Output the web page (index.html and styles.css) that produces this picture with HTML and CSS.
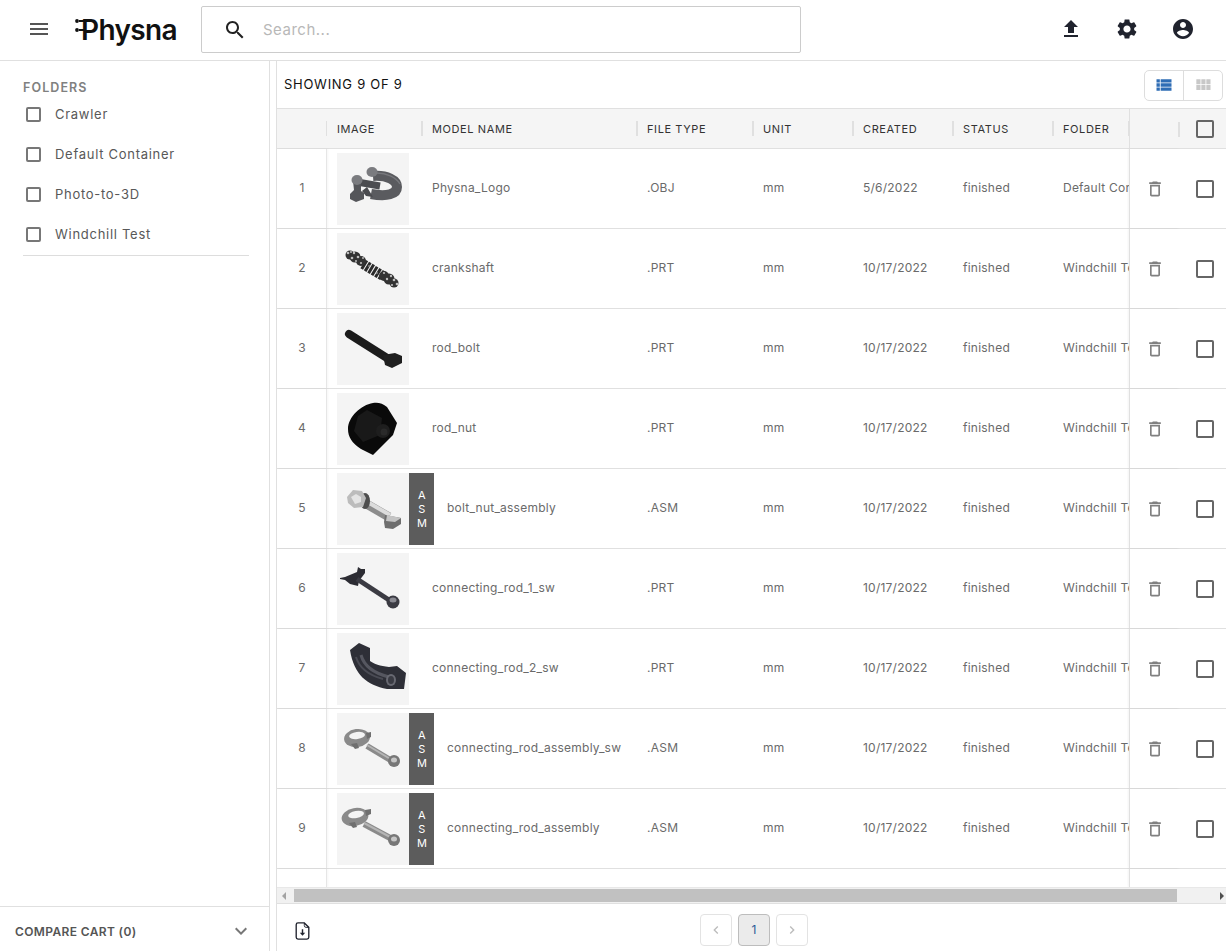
FILE: index.html
```html
<!DOCTYPE html>
<html lang="en">
<head>
<meta charset="utf-8">
<title>Physna</title>
<link rel="stylesheet" href="styles.css">
</head>
<body>
<header class="topbar">
  <svg class="icon menu-icon" viewBox="0 0 24 24"><path d="M3 18h18v-2H3v2zm0-5h18v-2H3v2zm0-7v2h18V6H3z"/></svg>
  <div class="logo"><svg class="logo-dots" viewBox="0 0 10 16"><circle cx="2" cy="3" r="1.900"/><circle cx="2" cy="12" r="1.900"/><rect x="4" y="2" width="6" height="2"/><rect x="4" y="11" width="6" height="2"/></svg><span class="logo-text">Physna</span></div>
  <div class="search">
    <svg class="icon search-icon" viewBox="0 0 24 24"><path d="M15.5 14h-.79l-.28-.27C15.41 12.59 16 11.11 16 9.500 16 5.910 13.090 3 9.500 3S3 5.910 3 9.500 5.910 16 9.500 16c1.610 0 3.090-.59 4.230-1.570l.27.28v.79l5 4.990L20.490 19l-4.990-5zm-6 0C7.010 14 5 11.990 5 9.500S7.010 5 9.500 5 14 7.010 14 9.500 11.990 14 9.500 14z"/></svg>
    <span class="placeholder">Search...</span>
  </div>
  <div class="top-actions">
    <svg class="icon" viewBox="0 0 24 24"><path d="M9 16h6v-6h4l-7-7-7 7h4zm-4 2h14v2H5z"/></svg>
    <svg class="icon" viewBox="0 0 24 24"><path d="M19.14 12.94c.04-.3.06-.61.06-.94 0-.32-.02-.64-.07-.94l2.03-1.58c.18-.14.23-.41.12-.61l-1.92-3.32c-.12-.22-.37-.29-.59-.22l-2.39.96c-.5-.38-1.03-.7-1.62-.94l-.36-2.54c-.04-.24-.24-.41-.48-.41h-3.84c-.24 0-.43.17-.47.41l-.36 2.54c-.59.24-1.13.57-1.62.94l-2.39-.96c-.22-.08-.47 0-.59.22L2.74 8.87c-.12.21-.08.47.12.61l2.03 1.58c-.05.3-.09.63-.09.94s.02.64.07.94l-2.03 1.58c-.18.14-.23.41-.12.61l1.92 3.32c.12.22.37.29.59.22l2.39-.96c.5.38 1.03.7 1.62.94l.36 2.54c.05.24.24.41.48.41h3.84c.24 0 .44-.17.47-.41l.36-2.54c.59-.24 1.13-.56 1.62-.94l2.39.96c.22.08.47 0 .59-.22l1.92-3.32c.12-.22.07-.47-.12-.61l-2.01-1.58zM12 15.6c-1.98 0-3.6-1.62-3.6-3.6s1.62-3.6 3.6-3.6 3.6 1.62 3.6 3.6-1.62 3.6-3.6 3.6z"/></svg>
    <svg class="icon" viewBox="0 0 24 24"><path d="M12 2C6.48 2 2 6.48 2 12s4.48 10 10 10 10-4.48 10-10S17.52 2 12 2zm0 3c1.66 0 3 1.34 3 3s-1.34 3-3 3-3-1.34-3-3 1.34-3 3-3zm0 14.2c-2.5 0-4.71-1.28-6-3.22.03-1.99 4-3.08 6-3.08 1.99 0 5.97 1.09 6 3.08-1.29 1.94-3.5 3.22-6 3.22z"/></svg>
  </div>
</header>
<div class="body">
  <aside class="sidebar">
    <div class="folders">
      <h2 class="folders-title">FOLDERS</h2>
      <div class="folder-row"><span class="check"></span>Crawler</div>
      <div class="folder-row"><span class="check"></span>Default Container</div>
      <div class="folder-row"><span class="check"></span>Photo-to-3D</div>
      <div class="folder-row"><span class="check"></span>Windchill Test</div>
    </div>
    <div class="compare">
      <span>COMPARE CART (0)</span>
      <svg class="compare-chevron" viewBox="0 0 24 24"><path d="M7.41 8.59 12 13.17l4.590-4.580L18 10l-6 6-6-6z"/></svg>
    </div>
  </aside>
  <main class="main">
    <div class="toolbar">
      <span class="showing">SHOWING 9 OF 9</span>
      <div class="toggle">
        <span class="toggle-btn"><svg class="toggle-icon active" viewBox="0 0 24 24"><path d="M3 14h4v-4H3v4zm0 5h4v-4H3v4zM3 9h4V5H3v4zm5 5h13v-4H8v4zm0 5h13v-4H8v4zM8 5v4h13V5H8z"/></svg></span>
        <span class="toggle-btn"><svg class="toggle-icon" viewBox="0 0 24 24"><path d="M4 11h5V5H4v6zm0 7h5v-6H4v6zm6 0h5v-6h-5v6zm6 0h5v-6h-5v6zm-6-7h5V5h-5v6zm6-6v6h5V5h-5z"/></svg></span>
      </div>
    </div>
    <div class="table">
      <div class="row head">
        <div class="hc"></div>
        <div class="hc">IMAGE</div>
        <div class="hc hc-strong">MODEL NAME</div>
        <div class="hc">FILE TYPE</div>
        <div class="hc">UNIT</div>
        <div class="hc">CREATED</div>
        <div class="hc">STATUS</div>
        <div class="hc">FOLDER</div>
        <div class="hc hc-action"></div>
        <div class="hc hc-check"><span class="check check-lg"></span></div>
      </div>

      <div class="row item">
        <div class="c idx">1</div>
        <div class="c img"><svg class="thumb" viewBox="0 0 72 72"><path d="M36 23C50 22 60 27 60 34 60 41 50 44 34 41" fill="none" stroke="#5a5b5f" stroke-width="10"/><path d="M20 29l23 4" stroke="#4b4c50" stroke-width="7"/><path d="M30 34l6 10-7-1-4-5z" fill="#4b4c50"/><path d="M16 28h8v10l3 2 0 6-8 3-6-3 0-5 4-4z" fill="#55565a"/><path d="M40 20c9 0 19 4 23 11" fill="none" stroke="#77787c" stroke-width="1.500"/><ellipse cx="20" cy="27" rx="5.500" ry="5" fill="#7a7b7f"/><ellipse cx="35" cy="19" rx="5.500" ry="5" fill="#7a7b7f"/></svg></div>
        <div class="c name">Physna_Logo</div><div class="c">.OBJ</div><div class="c">mm</div><div class="c">5/6/2022</div><div class="c">finished</div><div class="c fold">Default Container</div>
        <div class="c act"><svg class="trash" viewBox="0 0 24 24"><path d="M6 19c0 1.100.9 2 2 2h8c1.100 0 2-.9 2-2V7H6v12zM8 9h8v10H8V9zm7.500-5l-1-1h-5l-1 1H5v2h14V4z"/></svg></div>
        <div class="c chk"><span class="check check-lg"></span></div>
      </div>

      <div class="row item">
        <div class="c idx">2</div>
        <div class="c img"><svg class="thumb" viewBox="0 0 72 72"><path d="M26 31l20 12" stroke="#2b2b2b" stroke-width="10" stroke-dasharray="3 1"/><g fill="#333"><circle cx="13" cy="22" r="4.500"/><circle cx="18" cy="24" r="5.500"/><circle cx="24" cy="28" r="5"/><circle cx="47" cy="43" r="5"/><circle cx="52" cy="46" r="5.500"/><circle cx="57" cy="50" r="4.500"/></g><g fill="#bdbdbd"><circle cx="11" cy="20" r="1.300"/><circle cx="15" cy="25" r="1.300"/><circle cx="17" cy="20" r="1.200"/><circle cx="21" cy="24" r="1.300"/><circle cx="24" cy="30" r="1.100"/><circle cx="14" cy="19" r="1"/><circle cx="19" cy="28" r="1"/><circle cx="26" cy="25" r="1"/><circle cx="47" cy="40" r="1.100"/><circle cx="50" cy="46" r="1.200"/><circle cx="54" cy="43" r="1.200"/><circle cx="57" cy="47" r="1.300"/><circle cx="60" cy="51" r="1.300"/><circle cx="55" cy="52" r="1.100"/><circle cx="32" cy="33" r=".8"/><circle cx="40" cy="40" r=".8"/></g></svg></div>
        <div class="c name">crankshaft</div><div class="c">.PRT</div><div class="c">mm</div><div class="c">10/17/2022</div><div class="c">finished</div><div class="c fold">Windchill Test</div>
        <div class="c act"><svg class="trash" viewBox="0 0 24 24"><path d="M6 19c0 1.100.9 2 2 2h8c1.100 0 2-.9 2-2V7H6v12zM8 9h8v10H8V9zm7.500-5l-1-1h-5l-1 1H5v2h14V4z"/></svg></div>
        <div class="c chk"><span class="check check-lg"></span></div>
      </div>

      <div class="row item">
        <div class="c idx">3</div>
        <div class="c img"><svg class="thumb" viewBox="0 0 72 72"><path d="M12 21l38 24" stroke="#1b1b1b" stroke-width="8" stroke-linecap="round"/><path d="M46 42l12-2 7 3 0 7-10 5-7-3z" fill="#1f1f1f"/></svg></div>
        <div class="c name">rod_bolt</div><div class="c">.PRT</div><div class="c">mm</div><div class="c">10/17/2022</div><div class="c">finished</div><div class="c fold">Windchill Test</div>
        <div class="c act"><svg class="trash" viewBox="0 0 24 24"><path d="M6 19c0 1.100.9 2 2 2h8c1.100 0 2-.9 2-2V7H6v12zM8 9h8v10H8V9zm7.500-5l-1-1h-5l-1 1H5v2h14V4z"/></svg></div>
        <div class="c chk"><span class="check check-lg"></span></div>
      </div>

      <div class="row item">
        <div class="c idx">4</div>
        <div class="c img"><svg class="thumb" viewBox="0 0 72 72"><path d="M36 10C40 9 46 10 50 14L60 30 56 42 36 62 24 56C15 50 11 44 11 36 11 24 24 12 36 10z" fill="#0a0a0a"/><path d="M30 17l15 8-2 17-17 7-9-11 4-15z" fill="#191919"/><circle cx="46" cy="38" r="7" fill="#1e1e1e"/><circle cx="47" cy="39" r="3.500" fill="#2a2a2a"/></svg></div>
        <div class="c name">rod_nut</div><div class="c">.PRT</div><div class="c">mm</div><div class="c">10/17/2022</div><div class="c">finished</div><div class="c fold">Windchill Test</div>
        <div class="c act"><svg class="trash" viewBox="0 0 24 24"><path d="M6 19c0 1.100.9 2 2 2h8c1.100 0 2-.9 2-2V7H6v12zM8 9h8v10H8V9zm7.500-5l-1-1h-5l-1 1H5v2h14V4z"/></svg></div>
        <div class="c chk"><span class="check check-lg"></span></div>
      </div>

      <div class="row item">
        <div class="c idx">5</div>
        <div class="c img"><svg class="thumb" viewBox="0 0 72 72"><path d="M26 29l26 15" stroke="#8c8c8c" stroke-width="9"/><path d="M27 27l26 15" stroke="#dcdcdc" stroke-width="4"/><path d="M48 42l16 3v6l-8 5-8-1-1-6z" fill="#6e6e6e"/><path d="M50 42l14 3-6 4-9-1z" fill="#c4c4c4"/><ellipse cx="28" cy="28" rx="5" ry="8" fill="#4e4e4e"/><path d="M10 24l6-7 9 1 4 7-3 9-9 1-6-5z" fill="#bcbcbc"/><path d="M14 24l5-3 5 3v5l-6 2z" fill="#e4e4e4"/></svg><span class="asm"><span>A</span><span>S</span><span>M</span></span></div>
        <div class="c name name-asm">bolt_nut_assembly</div><div class="c">.ASM</div><div class="c">mm</div><div class="c">10/17/2022</div><div class="c">finished</div><div class="c fold">Windchill Test</div>
        <div class="c act"><svg class="trash" viewBox="0 0 24 24"><path d="M6 19c0 1.100.9 2 2 2h8c1.100 0 2-.9 2-2V7H6v12zM8 9h8v10H8V9zm7.500-5l-1-1h-5l-1 1H5v2h14V4z"/></svg></div>
        <div class="c chk"><span class="check check-lg"></span></div>
      </div>

      <div class="row item">
        <div class="c idx">6</div>
        <div class="c img"><svg class="thumb" viewBox="0 0 72 72"><path d="M3 25l5-1 12-5 1-5 3 2 4 0 0 4-6 8-1 5-8-2-5-4-5-1z" fill="#2c2c33"/><path d="M20 26l32 21" stroke="#3b3b43" stroke-width="5"/><circle cx="56" cy="49" r="6.500" fill="#3a3a42"/><ellipse cx="56" cy="47" rx="3.500" ry="2.500" fill="#8a8a92"/></svg></div>
        <div class="c name">connecting_rod_1_sw</div><div class="c">.PRT</div><div class="c">mm</div><div class="c">10/17/2022</div><div class="c">finished</div><div class="c fold">Windchill Test</div>
        <div class="c act"><svg class="trash" viewBox="0 0 24 24"><path d="M6 19c0 1.100.9 2 2 2h8c1.100 0 2-.9 2-2V7H6v12zM8 9h8v10H8V9zm7.500-5l-1-1h-5l-1 1H5v2h14V4z"/></svg></div>
        <div class="c chk"><span class="check check-lg"></span></div>
      </div>

      <div class="row item">
        <div class="c idx">7</div>
        <div class="c img"><svg class="thumb" viewBox="0 0 72 72"><path d="M13 17l9-7 11 5 0 13c4 3 10 5 19 6l8-1 9 7-2 16-17 0C30 52 17 42 13 17z" fill="#2e2f37"/><path d="M24 22c3 11 12 18 28 22" fill="none" stroke="#565760" stroke-width="3"/><path d="M19 24c3 10 12 18 27 22" fill="none" stroke="#4a4b54" stroke-width="2"/><ellipse cx="54" cy="47" rx="5" ry="6" fill="#686972"/><ellipse cx="54" cy="47" rx="3" ry="4" fill="#3a3b43"/></svg></div>
        <div class="c name">connecting_rod_2_sw</div><div class="c">.PRT</div><div class="c">mm</div><div class="c">10/17/2022</div><div class="c">finished</div><div class="c fold">Windchill Test</div>
        <div class="c act"><svg class="trash" viewBox="0 0 24 24"><path d="M6 19c0 1.100.9 2 2 2h8c1.100 0 2-.9 2-2V7H6v12zM8 9h8v10H8V9zm7.500-5l-1-1h-5l-1 1H5v2h14V4z"/></svg></div>
        <div class="c chk"><span class="check check-lg"></span></div>
      </div>

      <div class="row item">
        <div class="c idx">8</div>
        <div class="c img"><svg class="thumb" viewBox="0 0 72 72"><path d="M30 33l25 15" stroke="#8a8a8a" stroke-width="6"/><path d="M30 32l25 15" stroke="#b5b5b5" stroke-width="2"/><ellipse cx="20" cy="25" rx="13" ry="9" fill="#8a8a8a" transform="rotate(-8 20 25)"/><ellipse cx="20" cy="22.500" rx="8" ry="3.500" fill="#f4f4f4" transform="rotate(-8 20 22)"/><path d="M14 31l4 5 4-1-2-5zM29 20l5-1 0 5-4 2z" fill="#6f6f6f"/><circle cx="57" cy="48" r="6" fill="#777"/><ellipse cx="57" cy="47" rx="3" ry="2.500" fill="#c6c6c6"/></svg><span class="asm"><span>A</span><span>S</span><span>M</span></span></div>
        <div class="c name name-asm">connecting_rod_assembly_sw</div><div class="c">.ASM</div><div class="c">mm</div><div class="c">10/17/2022</div><div class="c">finished</div><div class="c fold">Windchill Test</div>
        <div class="c act"><svg class="trash" viewBox="0 0 24 24"><path d="M6 19c0 1.100.9 2 2 2h8c1.100 0 2-.9 2-2V7H6v12zM8 9h8v10H8V9zm7.500-5l-1-1h-5l-1 1H5v2h14V4z"/></svg></div>
        <div class="c chk"><span class="check check-lg"></span></div>
      </div>

      <div class="row item">
        <div class="c idx">9</div>
        <div class="c img"><svg class="thumb" viewBox="0 0 72 72"><path d="M27 31l28 15" stroke="#8a8a8a" stroke-width="6"/><path d="M27 30l28 15" stroke="#b5b5b5" stroke-width="2"/><ellipse cx="18" cy="24" rx="13.500" ry="9" fill="#8a8a8a" transform="rotate(-10 18 24)"/><ellipse cx="19" cy="21.500" rx="8" ry="3.500" fill="#f4f4f4" transform="rotate(-10 19 21)"/><path d="M12 30l4 5 4-1-2-5zM28 17l6-1 0 5-5 2z" fill="#6f6f6f"/><circle cx="57" cy="47" r="6" fill="#777"/><ellipse cx="57" cy="46" rx="3" ry="2.500" fill="#c6c6c6"/></svg><span class="asm"><span>A</span><span>S</span><span>M</span></span></div>
        <div class="c name name-asm">connecting_rod_assembly</div><div class="c">.ASM</div><div class="c">mm</div><div class="c">10/17/2022</div><div class="c">finished</div><div class="c fold">Windchill Test</div>
        <div class="c act"><svg class="trash" viewBox="0 0 24 24"><path d="M6 19c0 1.100.9 2 2 2h8c1.100 0 2-.9 2-2V7H6v12zM8 9h8v10H8V9zm7.500-5l-1-1h-5l-1 1H5v2h14V4z"/></svg></div>
        <div class="c chk"><span class="check check-lg"></span></div>
      </div>

      <div class="row filler">
        <div class="c idx"></div><div class="c"></div><div class="c"></div><div class="c"></div><div class="c"></div><div class="c"></div><div class="c"></div><div class="c"></div><div class="c act"></div><div class="c"></div>
      </div>
    </div>
    <div class="scrollbar">
      <span class="arrow arrow-left"></span>
      <span class="thumbbar"></span>
      <span class="arrow arrow-right"></span>
    </div>
    <div class="footer">
      <svg class="export" viewBox="0 0 16 20"><path d="M3 1h7l5 5v11a2 2 0 0 1-2 2H3a2 2 0 0 1-2-2V3a2 2 0 0 1 2-2z" fill="none" stroke="#20232e" stroke-width="1.500"/><path d="M10 1v3a2 2 0 0 0 2 2h3" fill="none" stroke="#20232e" stroke-width="1"/><path d="M7.200 8h1.600v4H11l-3 3.200L5 12h2.200z" fill="#20232e"/></svg>
      <div class="pager">
        <span class="page"><svg class="page-chevron" viewBox="0 0 24 24"><path d="M15.410 7.410 14 6l-6 6 6 6 1.410-1.410L10.830 12z"/></svg></span>
        <span class="page current">1</span>
        <span class="page"><svg class="page-chevron" viewBox="0 0 24 24"><path d="M10 6 8.590 7.410 13.170 12l-4.580 4.590L10 18l6-6z"/></svg></span>
      </div>
    </div>
  </main>
</div>
</body>
</html>
```
FILE: styles.css
```css
* { box-sizing: border-box; }
html, body { margin: 0; height: 100%; overflow: hidden; }
body {
  display: flex;
  flex-direction: column;
  height: 951px;
  font-family: Inter, "Liberation Sans", sans-serif;
  font-size: 12px;
  letter-spacing: .23px;
  color: #6a6a6a;
  background: #fff;
}
.icon { width: 24px; height: 24px; fill: #20232e; flex: none; }

/* top bar */
.topbar {
  height: 61px;
  flex: none;
  display: flex;
  align-items: center;
  border-bottom: 1px solid #e0e0e0;
  padding: 0 0 0 27px;
}
.menu-icon { fill: #555; margin-top: -2px; }
.logo { display: flex; align-items: center; margin-left: 24px; width: 126px; height: 40px; margin-top: -1px; }
.logo-dots { width: 10px; height: 16px; fill: #111; margin-right: -4px; margin-top: -8px; flex: none; }
.logo-text { font-size: 28px; font-weight: 600; color: #111; letter-spacing: -0.65px; }
.search {
  width: 600px;
  height: 47px;
  margin-top: -1px;
  border: 1px solid #ccc;
  border-radius: 2px;
  display: flex;
  align-items: center;
  padding-left: 21px;
}
.search-icon { fill: #222; }
.placeholder { margin-left: 16px; font-size: 15px; color: #b8b8b8; letter-spacing: .5px; }
.top-actions { margin-left: auto; display: flex; gap: 32px; padding-right: 31px; margin-top: -3px; }

/* layout */
.body { flex: 1; min-height: 0; display: flex; }
.sidebar {
  width: 270px;
  flex: none;
  display: flex;
  flex-direction: column;
  justify-content: space-between;
  border-right: 1px solid #e0e0e0;
}
.folders { margin: 0 20px 0 23px; padding-top: 19px; border-bottom: 1px solid #ddd; height: 195px; }
.folders-title { margin: 0 0 -1px; font-size: 12.5px; line-height: 15px; font-weight: 600; color: #808080; letter-spacing: 1.1px; }
.folder-row { display: flex; align-items: center; height: 40px; font-size: 13px; color: #585858; letter-spacing: .72px; }
.check { width: 15px; height: 15px; border: 2px solid #777; border-radius: 2px; margin: 0 14px 0 3px; flex: none; }
.check-lg { width: 18px; height: 18px; border-color: #666; margin: 0; }
.compare {
  height: 45px;
  padding: 4px 17px 0 15px;
  border-top: 1px solid #e0e0e0;
  display: flex;
  align-items: center;
  justify-content: space-between;
  font-size: 12px;
  font-weight: 600;
  letter-spacing: .37px;
  color: #555;
}
.compare-chevron { width: 24px; height: 24px; fill: #777; margin-right: -1px; }

.main {
  flex: 1;
  min-width: 0;
  margin-left: 6px;
  border-left: 1px solid #e0e0e0;
  display: flex;
  flex-direction: column;
}
.toolbar { height: 48px; flex: none; display: flex; align-items: center; justify-content: space-between; padding: 0 3px 0 7px; border-bottom: 1px solid #e0e0e0; }
.showing { font-size: 13px; font-weight: 400; color: #111; margin-top: -1px; letter-spacing: .72px; }
.toggle { width: 79px; height: 31px; border: 1px solid #ddd; border-radius: 5px; display: flex; margin-top: 1px; }
.toggle-btn { flex: 1; display: flex; align-items: center; justify-content: center; }
.toggle-btn + .toggle-btn { border-left: 1px solid #ddd; }
.toggle-icon { width: 20px; height: 20px; fill: #c8c8c8; }
.toggle-icon.active { fill: #2f6db5; }

/* table */
.table { flex: 1; min-height: 0; display: flex; flex-direction: column; }
.row { display: grid; grid-template-columns: 50px 96px 214px 116px 100px 100px 100px 76px 51px 46px; }
.head { height: 40px; flex: none; background: #f5f5f5; border-bottom: 1px solid #e0e0e0; align-items: center; }
.hc { height: 15px; line-height: 17px; padding-left: 10px; font-size: 11px; font-weight: 400; color: #333; letter-spacing: .6px; border-right: 2px solid #e0e0e0; margin-right: -1px; white-space: nowrap; }
.hc:first-child { border-right-width: 1px; margin-right: 0; }
.hc:nth-child(2) { margin-right: 0; }
.hc-strong { padding-left: 9px; }
.hc-action { position: relative; height: 100%; border-left: 1px solid #e0e0e0; border-right: 0; margin-right: 0; display: flex; align-items: center; }
.hc-action::after { content: ""; position: absolute; right: 0; top: 13px; height: 15px; border-right: 2px solid #e0e0e0; }
.hc-check { border-right: 0; margin-right: 0; padding: 0 0 0 4px; height: auto; display: flex; align-items: center; justify-content: center; }
.item { height: 80px; flex: none; border-bottom: 1px solid #e0e0e0; }
.filler { flex: 1; min-height: 0; }
.c { display: flex; align-items: center; padding: 0 0 2px 10px; white-space: nowrap; overflow: hidden; color: #6a6a6a; }
.idx { justify-content: center; padding-left: 1px; border-right: 1px solid #e6e6e6; box-shadow: 1px 0 2px rgba(0,0,0,.04); overflow: visible; }
.img { position: relative; overflow: visible; align-items: flex-start; padding: 4px 0 0 10px; }
.thumb { width: 72px; height: 72px; background: #f4f4f4; display: block; flex: none; }
.asm {
  position: absolute;
  left: 82px;
  top: 4px;
  width: 25px;
  height: 72px;
  padding-left: 1px;
  background: #5c5c5c;
  color: #fff;
  font-size: 11px;
  line-height: 14px;
  display: flex;
  flex-direction: column;
  align-items: center;
  justify-content: center;
}
.name { padding-left: 9px; }
.name-asm { padding-left: 24px; }
.act { justify-content: center; padding: 0; border-left: 1px solid #e0e0e0; box-shadow: -1px 0 2px rgba(0,0,0,.05); }
.trash { width: 20px; height: 20px; fill: #808080; margin-right: 1px; margin-top: 1px; }
.chk { justify-content: center; padding: 0 0 0 4px; }

/* scrollbar */
.scrollbar { height: 17px; flex: none; background: #f1f1f1; border-top: 1px solid #e8e8e8; border-bottom: 1px solid #e0e0e0; display: flex; align-items: center; padding: 0 2px 0 5px; }
.thumbbar { width: 883px; height: 13px; background: #c1c1c1; margin-left: 8px; }
.arrow { width: 0; height: 0; border-top: 4px solid transparent; border-bottom: 4px solid transparent; }
.arrow-left { border-right: 4px solid #a3a3a3; }
.arrow-right { border-left: 4px solid #505050; margin-left: auto; }

/* footer */
.footer { height: 47px; flex: none; position: relative; display: flex; align-items: center; justify-content: center; }
.export { position: absolute; left: 18px; top: 18px; width: 15px; height: 18px; }
.pager { display: flex; gap: 6px; margin-top: 4px; margin-left: 5px; }
.page { width: 32px; height: 32px; border: 1px solid #e3e3e3; border-radius: 4px; display: flex; align-items: center; justify-content: center; font-size: 12px; color: #2d5a96; }
.page.current { background: #ebebeb; border-color: #bdbdbd; }
.page-chevron { width: 16px; height: 16px; fill: #bbb; }
```
